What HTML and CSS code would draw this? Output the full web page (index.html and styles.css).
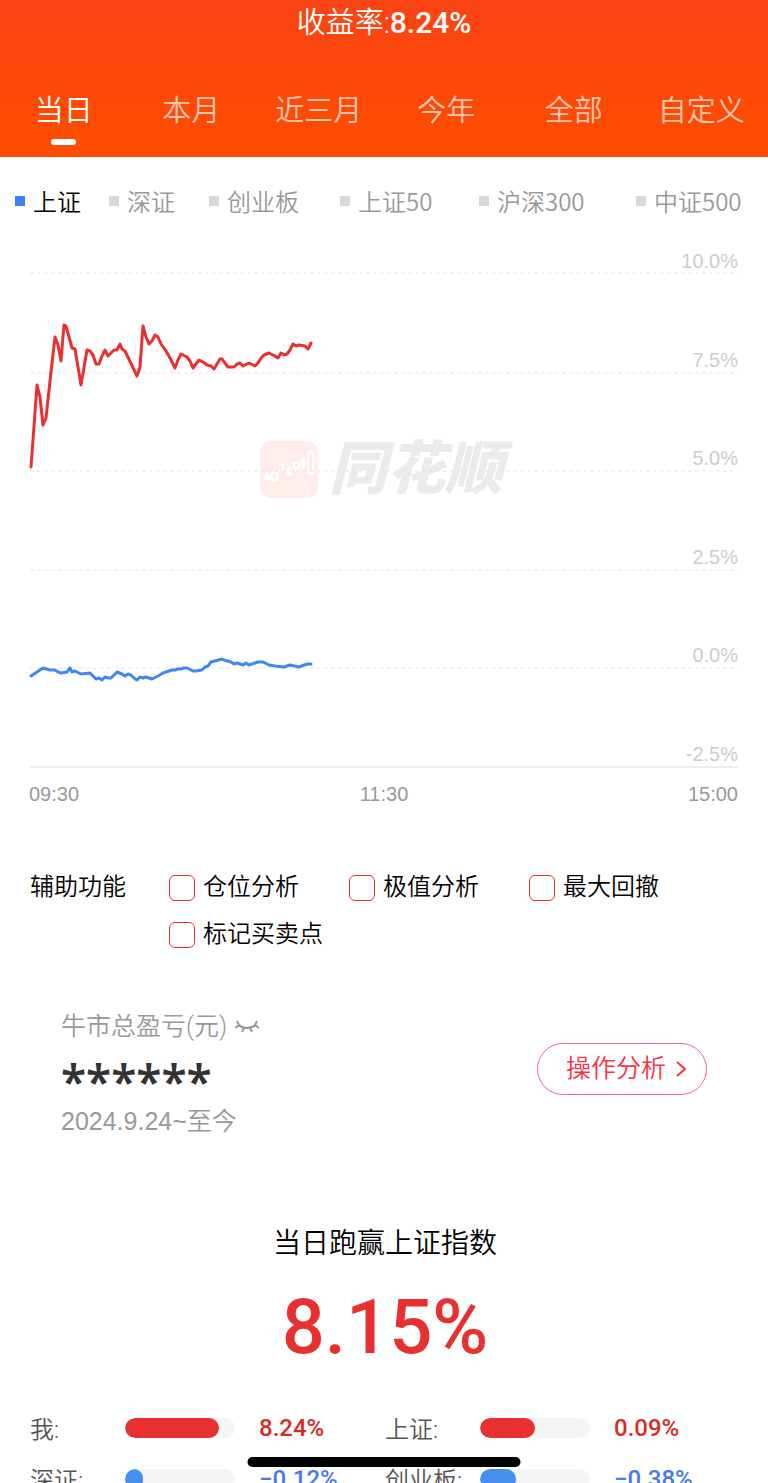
FILE: index.html
```html
<!DOCTYPE html>
<html lang="zh-CN">
<head>
    <meta charset="UTF-8">
    <meta name="viewport" content="width=device-width, initial-scale=1.0">
    <title>收益率</title>
    <link rel="stylesheet" href="styles.css">
</head>
<body>
    <header class="header">
        <h1 class="rate">收益率:<strong>8.24%</strong></h1>
        <nav class="tabs">
            <button class="tab active" type="button">当日</button>
            <button class="tab" type="button">本月</button>
            <button class="tab" type="button">近三月</button>
            <button class="tab" type="button">今年</button>
            <button class="tab" type="button">全部</button>
            <button class="tab" type="button">自定义</button>
        </nav>
    </header>

    <main>
        <div class="legend">
            <button class="legend-item active" type="button">上证</button>
            <button class="legend-item" type="button">深证</button>
            <button class="legend-item" type="button">创业板</button>
            <button class="legend-item" type="button">上证50</button>
            <button class="legend-item" type="button">沪深300</button>
            <button class="legend-item" type="button">中证500</button>
        </div>

        <svg class="chart" viewBox="0 0 768 580">
            <!-- watermark -->
            <rect class="mark-box" x="260" y="201" width="58" height="57" rx="11"/>
            <g class="mark-candles">
                <path class="solid" d="M264 234h6v6h-6zM286 228h6v8h-6zM301 219h5v8h-5z"/>
                <path d="M272 233h5v7h-5zM279 232v-3M279 225h4v7M294 223h5v5h-5zM308 213h5v20h-5z"/>
                <path d="M267 232v2M274.500 240v2M281 223v2M289 226v2M296.500 228v4M303.500 217v13M310.500 210v3M310.500 233v3"/>
            </g>
            <text class="mark-text" x="329" y="249">同花顺</text>

            <!-- grid -->
            <path class="grid" d="M30 33H738M30 133H738M30 231H738M30 330H738M30 428H738"/>
            <path class="axis" d="M30 527H738"/>

            <!-- y labels -->
            <g class="y-labels">
                <text x="738" y="28">10.0%</text>
                <text x="738" y="127">7.5%</text>
                <text x="738" y="225">5.0%</text>
                <text x="738" y="324">2.5%</text>
                <text x="738" y="422">0.0%</text>
                <text x="738" y="521">-2.5%</text>
            </g>

            <!-- x labels -->
            <g class="x-labels">
                <text x="29" y="561">09:30</text>
                <text x="384" y="561" text-anchor="middle">11:30</text>
                <text x="738" y="561" text-anchor="end">15:00</text>
            </g>

            <polyline class="line mine" points="31,227 37,145 40,157 43,185 46,178 51,132 55,97 58,105 61,121 64,85 66,86 72,108 75,109 81,145 87,110 90,111 93,115 96,124 99,124 102,116 105,110 108,116 114,110 117,110 120,104 122,109 125,111 137,136 140,127 143,86 146,97 149,104 152,101 155,95 158,97 161,104 166,111 170,118 175,128 178,120 181,114 187,117 190,121 193,128 199,120 203,122 207,125 211,126 214,129 220,119 222,119 228,127 234,127 237,124 240,123 243,126 249,123 255,126 258,123 261,118 264,115 269,113 275,116 278,118 281,113 284,115 287,114 290,110 293,104 296,106 299,105 305,106 308,109 311,103"/>
            <polyline class="line index" points="31,436 37,432 43,428 50,430 55,430 58,432 61,433 67,432 70,428 72,432 75,431 81,434 90,433 96,439 99,438 102,440 105,437 108,438 111,438 117,432 122,434 125,436 128,434 131,435 134,438 137,440 140,437 143,438 146,437 152,439 158,436 163,433 172,430 175,430 178,429 181,429 184,428 187,428 193,431 196,431 202,430 205,427 208,426 211,422 222,419 224,420 231,422 234,424 237,423 243,425 246,423 249,425 258,422 263,422 269,425 275,426 284,427 290,425 299,427 307,424 311,424"/>
        </svg>

        <section class="tools">
            <span class="tools-title">辅助功能</span>
            <div class="tools-list">
                <label class="check"><input type="checkbox">仓位分析</label>
                <label class="check"><input type="checkbox">极值分析</label>
                <label class="check"><input type="checkbox">最大回撤</label>
                <label class="check"><input type="checkbox">标记买卖点</label>
            </div>
        </section>

        <section class="profit">
            <div>
                <div class="profit-title">
                    牛市总盈亏(元)
                    <svg class="eye" width="26" height="16" viewBox="0 0 26 16">
                        <path d="M3 2L5 6C9 10 17 10 21 6L23 2M5 6L1 9M21 6L25 9M10 9L8 13M16 9L18 13"/>
                    </svg>
                </div>
                <div class="profit-value">******</div>
                <div class="profit-date">2024.9.24~至今</div>
            </div>
            <a class="analyse" href="#">操作分析
                <svg width="10" height="18" viewBox="0 0 10 18"><path d="M1 2L9 9L1 16"/></svg>
            </a>
        </section>

        <section class="compare">
            <h2 class="compare-title">当日跑赢上证指数</h2>
            <div class="compare-value">8.15%</div>
            <div class="bars">
                <div class="bar-row">
                    <span class="bar-name">我:</span>
                    <div class="bar"><div class="fill" style="width: 85%"></div></div>
                    <span class="bar-value">8.24%</span>
                </div>
                <div class="bar-row">
                    <span class="bar-name">上证:</span>
                    <div class="bar"><div class="fill" style="width: 50%"></div></div>
                    <span class="bar-value">0.09%</span>
                </div>
                <div class="bar-row down">
                    <span class="bar-name">深证:</span>
                    <div class="bar"><div class="fill" style="width: 16%"></div></div>
                    <span class="bar-value">−0.12%</span>
                </div>
                <div class="bar-row down">
                    <span class="bar-name">创业板:</span>
                    <div class="bar"><div class="fill" style="width: 33%"></div></div>
                    <span class="bar-value">−0.38%</span>
                </div>
            </div>
        </section>
    </main>
    <div class="home-bar"></div>
</body>
</html>
```
FILE: styles.css
```css
* {
    box-sizing: border-box;
}
body {
    font-family: Roboto, "Noto Sans CJK SC", sans-serif;
    font-weight: 350;
    background-color: #fff;
    color: #000;
    margin: 0;
    height: 100vh;
    overflow: hidden;
}
button {
    font-family: inherit;
    font-weight: inherit;
    background: none;
    border: none;
    padding: 0;
    cursor: pointer;
}
.header {
    background: linear-gradient(#fb4414, #ff4d00);
    color: #fff;
    height: 157px;
}
.rate {
    margin: 0;
    padding-top: 3px;
    font-size: 29px;
    line-height: 40px;
    font-weight: 350;
    text-align: center;
}
.rate strong {
    font-size: 30px;
    font-weight: 500;
}
.tabs {
    display: grid;
    grid-template-columns: repeat(6, 1fr);
    padding: 47px 3px 0 0;
}
.tab {
    display: flex;
    flex-direction: column;
    align-items: center;
    gap: 6px;
    font-size: 29px;
    line-height: 43px;
    color: rgba(255, 255, 255, 0.7);
}
.tab.active {
    color: #fff;
}
.tab.active::after {
    content: "";
    width: 25px;
    height: 6px;
    border-radius: 3px;
    background-color: #fff;
}

/* legend */
.legend {
    display: grid;
    grid-template-columns: 94fr 100fr 131fr 139fr 157fr 132fr;
    padding: 26px 0 0 15px;
}
.legend-item {
    display: flex;
    align-items: center;
    gap: 8px;
    font-family: "Noto Sans CJK SC", sans-serif;
    font-size: 24px;
    line-height: 36px;
    color: #999;
    white-space: nowrap;
}
.legend-item::before {
    content: "";
    width: 10px;
    height: 10px;
    background-color: #d8d8d8;
}
.legend-item.active {
    color: #000;
}
.legend-item.active::before {
    background-color: #3f7ffb;
}

/* chart */
.chart {
    display: block;
    width: 100%;
    margin-top: 21px;
    font-family: "Liberation Sans", sans-serif;
    font-size: 20px;
}
.grid {
    fill: none;
    stroke: #e6e6e6;
    stroke-width: 1;
    stroke-dasharray: 4 3;
}
.axis {
    stroke: #dcdcdc;
    stroke-width: 1;
}
.y-labels {
    fill: #ccc;
    text-anchor: end;
}
.x-labels {
    fill: #999;
}
.line {
    fill: none;
    stroke-width: 3;
    stroke-linejoin: round;
    stroke-linecap: round;
}
.mine {
    stroke: #e93030;
}
.index {
    stroke: #4287ee;
}
.mark-box {
    fill: #ffeceb;
}
.mark-candles {
    fill: none;
    stroke: #fff;
    stroke-width: 2;
}
.mark-candles .solid {
    fill: #fff;
    stroke: none;
}
.mark-text {
    font-family: "Noto Sans CJK SC", sans-serif;
    font-size: 58px;
    font-weight: 900;
    font-style: italic;
    fill: #ebebeb;
}

/* checkboxes */
.tools {
    display: flex;
    padding: 44px 30px 0;
    font-size: 24px;
    line-height: 47px;
}
.tools-title {
    flex: 0 0 139px;
}
.tools-list {
    flex: 1;
    display: grid;
    grid-template-columns: repeat(auto-fill, 180px);
    margin-right: -30px;
}
.check {
    display: flex;
    align-items: center;
    gap: 8px;
}
.check input {
    appearance: none;
    width: 26px;
    height: 26px;
    margin: 0;
    border: 1px solid #ec3030;
    border-radius: 6px;
}

/* profit */
.profit {
    display: flex;
    justify-content: space-between;
    align-items: flex-start;
    padding: 50px 61px 0;
    color: #999;
    font-size: 25px;
    line-height: 38px;
}
.profit-title {
    display: flex;
    align-items: center;
    gap: 7px;
}
.eye {
    fill: none;
    stroke: #999;
    stroke-width: 2;
}
.profit-value {
    font-family: "Noto Sans", sans-serif;
    font-size: 46px;
    line-height: 42px;
    padding-top: 14px;
    font-weight: 600;
    color: #333;
}
.profit-date {
    font-family: "Liberation Sans", "Noto Sans CJK SC", sans-serif;
}
.analyse {
    display: flex;
    align-items: center;
    justify-content: center;
    gap: 10px;
    width: 170px;
    height: 52px;
    margin-top: 35px;
    padding-left: 8px;
    border: 1px solid #ff6474;
    border-radius: 26px;
    color: #fd2f43;
    text-decoration: none;
}
.analyse svg {
    fill: none;
    stroke: #fd2f43;
    stroke-width: 2;
}

/* compare */
.compare {
    padding: 84px 28px 0 30px;
}
.compare-title {
    margin: 0;
    font-size: 28px;
    line-height: 40px;
    font-weight: 350;
    text-align: center;
}
.compare-value {
    font-size: 76px;
    line-height: 90px;
    padding-top: 18px;
    font-weight: 500;
    color: #e93030;
    text-align: center;
}
.bars {
    display: grid;
    grid-template-columns: 1fr 1fr;
    padding-top: 30px;
}
.bar-row {
    display: flex;
    align-items: center;
    height: 51px;
    font-size: 24px;
}
.bar-name {
    flex: 0 0 95px;
    color: #555;
}
.bar {
    flex: 0 0 110px;
    height: 20px;
    border-radius: 10px;
    background-color: #f5f5f5;
    overflow: hidden;
}
.fill {
    height: 100%;
    border-radius: 10px;
    background-color: #e93030;
}
.bar-value {
    padding-left: 24px;
    font-weight: 500;
    color: #d92b26;
}
.down .fill {
    background-color: #4590ee;
}
.down .bar-value {
    color: #4a78e8;
}
.home-bar {
    position: fixed;
    bottom: 16px;
    left: 50%;
    width: 273px;
    height: 10px;
    transform: translateX(-50%);
    border-radius: 5px;
    background-color: #000;
}
```
